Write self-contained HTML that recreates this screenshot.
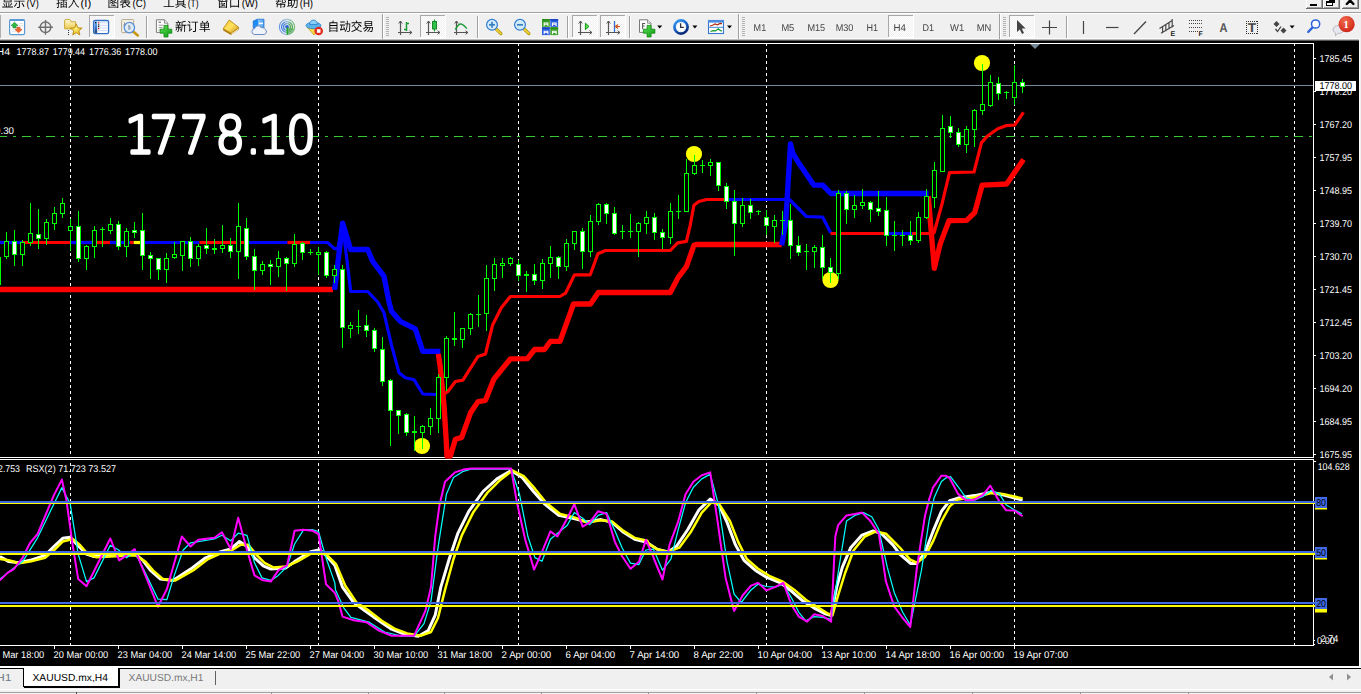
<!DOCTYPE html><html><head><meta charset="utf-8"><title>XAUUSD.mx,H4</title><style>html,body{margin:0;padding:0;background:#f0f0f0;overflow:hidden}body{width:1361px;height:694px;position:relative}</style></head><body><svg width="1361" height="694" viewBox="0 0 1361 694" font-family="Liberation Sans, Noto Sans CJK SC, sans-serif" style="position:absolute;left:0;top:0;text-rendering:geometricPrecision"><rect x="0" y="0" width="1361" height="694" fill="#f0f0f0" /><g shape-rendering="crispEdges"><rect x="0" y="41" width="1359" height="625" fill="#000" /><rect x="0" y="38" width="1361" height="1" fill="#fbfbfb" /><rect x="0" y="39" width="1361" height="1" fill="#bcbcbc" /><rect x="0" y="40" width="1361" height="1" fill="#585858" /><rect x="0" y="43" width="1314" height="1" fill="#fff" /><rect x="1313" y="43" width="1" height="414" fill="#fff" /><rect x="0" y="457" width="1314" height="1" fill="#fff" /><rect x="0" y="459" width="1314" height="1" fill="#fff" /><rect x="1313" y="459" width="1" height="187" fill="#fff" /><rect x="0" y="645" width="1314" height="1" fill="#fff" /></g><g shape-rendering="crispEdges" stroke="#fff" stroke-width="1" stroke-dasharray="3 3"><line x1="70.5" y1="43" x2="70.5" y2="457"/><line x1="70.5" y1="463" x2="70.5" y2="645"/><line x1="318.5" y1="43" x2="318.5" y2="457"/><line x1="318.5" y1="463" x2="318.5" y2="645"/><line x1="518.5" y1="43" x2="518.5" y2="457"/><line x1="518.5" y1="463" x2="518.5" y2="645"/><line x1="766.5" y1="43" x2="766.5" y2="457"/><line x1="766.5" y1="463" x2="766.5" y2="645"/><line x1="1014.5" y1="43" x2="1014.5" y2="457"/><line x1="1014.5" y1="463" x2="1014.5" y2="645"/><line x1="1294.5" y1="43" x2="1294.5" y2="457"/><line x1="1294.5" y1="463" x2="1294.5" y2="645"/></g><g shape-rendering="crispEdges"><rect x="0" y="85" width="1313" height="1" fill="#778899" /><line x1="-2" y1="136.5" x2="1313" y2="136.5" stroke="#32cd32" stroke-width="1" stroke-dasharray="9 6 3 6"/></g><g transform="scale(0.9,1)"><text x="138.9 166.2 199.7 239.4 273.3 287.4 318.2" y="152.7" font-family="DejaVu Sans, Liberation Sans, sans-serif" font-weight="200" font-size="51.5" fill="#fff" stroke="#fff" stroke-width="3.3" stroke-linejoin="round">1778.10</text></g><g stroke-linejoin="round" stroke-linecap="butt"><polyline points="-5.0,242.5 23.0,242.5" fill="none" stroke="#0000ff" stroke-width="3.2" /><polyline points="23.0,242.5 70.0,242.5" fill="none" stroke="#ff0000" stroke-width="3.2" /><polyline points="70.0,242.5 95.0,242.5" fill="none" stroke="#0000ff" stroke-width="3.2" /><polyline points="95.0,242.5 110.0,242.5" fill="none" stroke="#ff0000" stroke-width="3.2" /><polyline points="110.0,242.5 130.0,242.5" fill="none" stroke="#0000ff" stroke-width="3.2" /><polyline points="130.0,242.5 133.7,242.5" fill="none" stroke="#ff0000" stroke-width="3.2" /><polyline points="133.7,242.5 141.0,242.5" fill="none" stroke="#ffff00" stroke-width="3.2" /><polyline points="141.0,242.5 199.4,242.5" fill="none" stroke="#0000ff" stroke-width="3.2" /><polyline points="199.4,242.5 246.0,242.5" fill="none" stroke="#ff0000" stroke-width="3.2" /><polyline points="246.0,242.5 287.5,242.5" fill="none" stroke="#0000ff" stroke-width="3.2" /><polyline points="287.5,242.5 310.0,242.5" fill="none" stroke="#ff0000" stroke-width="3.2" /><polyline points="310.0,242.5 327.5,242.5 334.4,248.6 338.0,248.6 342.6,224.0 350.7,291.5 367.7,291.5 377.7,302.0 383.9,312.5 391.5,345.1 399.0,372.7 405.3,377.7 414.0,379.7 422.8,394.0 436.6,394.5" fill="none" stroke="#0000ff" stroke-width="3.2" /><polyline points="437.0,394.8 442.9,394.8 447.9,391.5 455.4,381.5 462.9,380.2 478.0,356.4 485.5,353.9 492.5,325.3 501.3,307.7 510.3,296.5 560.0,296.5 565.5,293.2 574.5,274.8 590.3,274.8 597.9,253.8 605.4,250.5 670.3,250.5 677.6,242.8 686.4,241.3 690.2,225.3 693.9,205.2 698.9,201.5 706.6,199.5 725.3,199.5" fill="none" stroke="#ff0000" stroke-width="3.2" /><polyline points="725.3,199.5 789.5,199.5 806.4,216.5 822.7,217.1 830.6,232.8" fill="none" stroke="#0000ff" stroke-width="3.2" /><polyline points="830.6,233.5 885.7,233.5" fill="none" stroke="#ff0000" stroke-width="3.2" /><polyline points="885.7,233.5 912.1,233.5" fill="none" stroke="#0000ff" stroke-width="3.2" /><polyline points="912.1,233.5 928.3,233.5 934.0,233.0 942.0,204.0 949.5,172.6 974.0,172.0 981.5,142.6 987.8,135.7 997.8,128.8 1006.6,125.6 1014.7,125.0 1023.5,112.3" fill="none" stroke="#ff0000" stroke-width="3.2" /><polyline points="-5.0,289.5 333.0,289.5" fill="none" stroke="#ff0000" stroke-width="5.3" /><polyline points="334.6,289.8 342.6,223.1 350.7,249.5 367.7,249.5 372.7,261.4 384.0,276.4 389.0,302.0 391.5,311.3 400.2,321.3 415.3,328.8 422.8,351.4 440.4,351.4" fill="none" stroke="#0000ff" stroke-width="5.3" /><polyline points="438.3,353.9 440.3,367.5 444.0,405.0 446.3,442.0 447.0,456.0 450.4,456.0 455.4,439.2 461.7,437.4 470.5,412.8 478.0,401.6 485.5,400.3 493.8,379.2 510.5,358.8 527.5,358.6 534.6,349.5 544.5,349.5 550.5,341.3 560.0,341.3 573.5,304.0 590.5,304.0 598.3,292.5 670.3,292.5 678.1,277.6 686.4,266.7 693.9,245.3 696.4,244.5 781.7,244.5" fill="none" stroke="#ff0000" stroke-width="5.3" /><polyline points="781.7,245.3 785.7,222.0 790.5,143.8 792.6,152.6 797.6,161.3 813.9,185.2 822.7,185.2 830.8,193.5 928.6,193.5" fill="none" stroke="#0000ff" stroke-width="5.3" /><polyline points="928.3,196.3 934.3,268.4 940.2,243.9 949.0,220.7 966.6,220.4 974.7,212.6 982.1,185.2 994.0,184.6 1006.6,184.0 1023.5,159.5" fill="none" stroke="#ff0000" stroke-width="5.3" /></g><circle cx="422" cy="446" r="8.1" fill="#ffff00"/><circle cx="694" cy="154" r="8.1" fill="#ffff00"/><circle cx="830.5" cy="280" r="8.1" fill="#ffff00"/><circle cx="982" cy="63" r="8.1" fill="#ffff00"/><g shape-rendering="crispEdges"><rect x="0" y="257" width="1" height="28" fill="#00ff00" /><rect x="6" y="232" width="1" height="27" fill="#00ff00" /><rect x="4" y="241" width="5" height="16" fill="#00ff00" /><rect x="5" y="242" width="3" height="14" fill="#000" /><rect x="14" y="230" width="1" height="36" fill="#00ff00" /><rect x="12" y="241" width="5" height="14" fill="#00ff00" /><rect x="13" y="242" width="3" height="12" fill="#fff" /><rect x="22" y="240" width="1" height="26" fill="#00ff00" /><rect x="20" y="242" width="5" height="13" fill="#00ff00" /><rect x="21" y="243" width="3" height="11" fill="#000" /><rect x="30" y="203" width="1" height="43" fill="#00ff00" /><rect x="28" y="233" width="5" height="10" fill="#00ff00" /><rect x="29" y="234" width="3" height="8" fill="#000" /><rect x="38" y="209" width="1" height="40" fill="#00ff00" /><rect x="36" y="234" width="5" height="5" fill="#00ff00" /><rect x="37" y="235" width="3" height="3" fill="#fff" /><rect x="46" y="219" width="1" height="26" fill="#00ff00" /><rect x="44" y="222" width="5" height="17" fill="#00ff00" /><rect x="45" y="223" width="3" height="15" fill="#000" /><rect x="54" y="207" width="1" height="23" fill="#00ff00" /><rect x="52" y="213" width="5" height="11" fill="#00ff00" /><rect x="53" y="214" width="3" height="9" fill="#000" /><rect x="62" y="198" width="1" height="20" fill="#00ff00" /><rect x="60" y="203" width="5" height="11" fill="#00ff00" /><rect x="61" y="204" width="3" height="9" fill="#000" /><rect x="70" y="219" width="1" height="32" fill="#00ff00" /><rect x="68" y="226" width="5" height="5" fill="#00ff00" /><rect x="69" y="227" width="3" height="3" fill="#000" /><rect x="78" y="211" width="1" height="51" fill="#00ff00" /><rect x="76" y="226" width="5" height="33" fill="#00ff00" /><rect x="77" y="227" width="3" height="31" fill="#fff" /><rect x="86" y="245" width="1" height="25" fill="#00ff00" /><rect x="84" y="246" width="5" height="13" fill="#00ff00" /><rect x="85" y="247" width="3" height="11" fill="#000" /><rect x="94" y="226" width="1" height="32" fill="#00ff00" /><rect x="92" y="230" width="5" height="17" fill="#00ff00" /><rect x="93" y="231" width="3" height="15" fill="#000" /><rect x="102" y="227" width="1" height="20" fill="#00ff00" /><rect x="100" y="229" width="5" height="1" fill="#00ff00" /><rect x="110" y="218" width="1" height="16" fill="#00ff00" /><rect x="108" y="224" width="5" height="7" fill="#00ff00" /><rect x="109" y="225" width="3" height="5" fill="#000" /><rect x="118" y="221" width="1" height="29" fill="#00ff00" /><rect x="116" y="224" width="5" height="23" fill="#00ff00" /><rect x="117" y="225" width="3" height="21" fill="#fff" /><rect x="126" y="228" width="1" height="29" fill="#00ff00" /><rect x="124" y="231" width="5" height="16" fill="#00ff00" /><rect x="125" y="232" width="3" height="14" fill="#000" /><rect x="134" y="222" width="1" height="16" fill="#00ff00" /><rect x="132" y="230" width="5" height="3" fill="#00ff00" /><rect x="133" y="231" width="3" height="1" fill="#fff" /><rect x="142" y="213" width="1" height="57" fill="#00ff00" /><rect x="140" y="230" width="5" height="26" fill="#00ff00" /><rect x="141" y="231" width="3" height="24" fill="#fff" /><rect x="150" y="252" width="1" height="27" fill="#00ff00" /><rect x="148" y="255" width="5" height="4" fill="#00ff00" /><rect x="149" y="256" width="3" height="2" fill="#fff" /><rect x="158" y="258" width="1" height="22" fill="#00ff00" /><rect x="156" y="258" width="5" height="12" fill="#00ff00" /><rect x="157" y="259" width="3" height="10" fill="#fff" /><rect x="166" y="253" width="1" height="30" fill="#00ff00" /><rect x="164" y="258" width="5" height="12" fill="#00ff00" /><rect x="165" y="259" width="3" height="10" fill="#000" /><rect x="174" y="242" width="1" height="17" fill="#00ff00" /><rect x="172" y="254" width="5" height="4" fill="#00ff00" /><rect x="173" y="255" width="3" height="2" fill="#000" /><rect x="182" y="241" width="1" height="30" fill="#00ff00" /><rect x="180" y="241" width="5" height="15" fill="#00ff00" /><rect x="181" y="242" width="3" height="13" fill="#000" /><rect x="190" y="237" width="1" height="30" fill="#00ff00" /><rect x="188" y="241" width="5" height="18" fill="#00ff00" /><rect x="189" y="242" width="3" height="16" fill="#fff" /><rect x="198" y="244" width="1" height="22" fill="#00ff00" /><rect x="196" y="246" width="5" height="13" fill="#00ff00" /><rect x="197" y="247" width="3" height="11" fill="#000" /><rect x="206" y="228" width="1" height="26" fill="#00ff00" /><rect x="204" y="245" width="5" height="4" fill="#00ff00" /><rect x="205" y="246" width="3" height="2" fill="#fff" /><rect x="214" y="239" width="1" height="15" fill="#00ff00" /><rect x="212" y="248" width="5" height="2" fill="#00ff00" /><rect x="222" y="225" width="1" height="28" fill="#00ff00" /><rect x="220" y="245" width="5" height="4" fill="#00ff00" /><rect x="221" y="246" width="3" height="2" fill="#000" /><rect x="230" y="238" width="1" height="20" fill="#00ff00" /><rect x="228" y="245" width="5" height="7" fill="#00ff00" /><rect x="229" y="246" width="3" height="5" fill="#fff" /><rect x="238" y="203" width="1" height="76" fill="#00ff00" /><rect x="236" y="226" width="5" height="26" fill="#00ff00" /><rect x="237" y="227" width="3" height="24" fill="#000" /><rect x="246" y="218" width="1" height="42" fill="#00ff00" /><rect x="244" y="228" width="5" height="29" fill="#00ff00" /><rect x="245" y="229" width="3" height="27" fill="#fff" /><rect x="254" y="249" width="1" height="41" fill="#00ff00" /><rect x="252" y="256" width="5" height="15" fill="#00ff00" /><rect x="253" y="257" width="3" height="13" fill="#fff" /><rect x="262" y="261" width="1" height="14" fill="#00ff00" /><rect x="260" y="264" width="5" height="7" fill="#00ff00" /><rect x="261" y="265" width="3" height="5" fill="#000" /><rect x="270" y="260" width="1" height="25" fill="#00ff00" /><rect x="268" y="264" width="5" height="3" fill="#00ff00" /><rect x="269" y="265" width="3" height="1" fill="#fff" /><rect x="278" y="251" width="1" height="26" fill="#00ff00" /><rect x="276" y="258" width="5" height="9" fill="#00ff00" /><rect x="277" y="259" width="3" height="7" fill="#000" /><rect x="286" y="257" width="1" height="34" fill="#00ff00" /><rect x="284" y="258" width="5" height="6" fill="#00ff00" /><rect x="285" y="259" width="3" height="4" fill="#fff" /><rect x="294" y="234" width="1" height="33" fill="#00ff00" /><rect x="292" y="244" width="5" height="20" fill="#00ff00" /><rect x="293" y="245" width="3" height="18" fill="#000" /><rect x="302" y="242" width="1" height="18" fill="#00ff00" /><rect x="300" y="243" width="5" height="10" fill="#00ff00" /><rect x="301" y="244" width="3" height="8" fill="#fff" /><rect x="310" y="249" width="1" height="6" fill="#00ff00" /><rect x="308" y="252" width="5" height="1" fill="#00ff00" /><rect x="318" y="247" width="1" height="28" fill="#00ff00" /><rect x="316" y="252" width="5" height="3" fill="#00ff00" /><rect x="317" y="253" width="3" height="1" fill="#000" /><rect x="326" y="251" width="1" height="27" fill="#00ff00" /><rect x="324" y="252" width="5" height="24" fill="#00ff00" /><rect x="325" y="253" width="3" height="22" fill="#fff" /><rect x="334" y="265" width="1" height="18" fill="#00ff00" /><rect x="332" y="269" width="5" height="7" fill="#00ff00" /><rect x="333" y="270" width="3" height="5" fill="#000" /><rect x="342" y="265" width="1" height="83" fill="#00ff00" /><rect x="340" y="269" width="5" height="59" fill="#00ff00" /><rect x="341" y="270" width="3" height="57" fill="#fff" /><rect x="350" y="322" width="1" height="16" fill="#00ff00" /><rect x="348" y="325" width="5" height="4" fill="#00ff00" /><rect x="349" y="326" width="3" height="2" fill="#000" /><rect x="358" y="310" width="1" height="24" fill="#00ff00" /><rect x="356" y="326" width="5" height="1" fill="#00ff00" /><rect x="366" y="315" width="1" height="22" fill="#00ff00" /><rect x="364" y="325" width="5" height="6" fill="#00ff00" /><rect x="365" y="326" width="3" height="4" fill="#fff" /><rect x="374" y="328" width="1" height="24" fill="#00ff00" /><rect x="372" y="330" width="5" height="19" fill="#00ff00" /><rect x="373" y="331" width="3" height="17" fill="#fff" /><rect x="382" y="337" width="1" height="49" fill="#00ff00" /><rect x="380" y="349" width="5" height="33" fill="#00ff00" /><rect x="381" y="350" width="3" height="31" fill="#fff" /><rect x="390" y="379" width="1" height="67" fill="#00ff00" /><rect x="388" y="380" width="5" height="31" fill="#00ff00" /><rect x="389" y="381" width="3" height="29" fill="#fff" /><rect x="398" y="410" width="1" height="24" fill="#00ff00" /><rect x="396" y="410" width="5" height="6" fill="#00ff00" /><rect x="397" y="411" width="3" height="4" fill="#fff" /><rect x="406" y="413" width="1" height="23" fill="#00ff00" /><rect x="404" y="414" width="5" height="19" fill="#00ff00" /><rect x="405" y="415" width="3" height="17" fill="#fff" /><rect x="414" y="416" width="1" height="35" fill="#00ff00" /><rect x="412" y="431" width="5" height="2" fill="#00ff00" /><rect x="422" y="425" width="1" height="24" fill="#00ff00" /><rect x="420" y="426" width="5" height="7" fill="#00ff00" /><rect x="421" y="427" width="3" height="5" fill="#000" /><rect x="430" y="408" width="1" height="27" fill="#00ff00" /><rect x="428" y="418" width="5" height="9" fill="#00ff00" /><rect x="429" y="419" width="3" height="7" fill="#000" /><rect x="438" y="374" width="1" height="59" fill="#00ff00" /><rect x="436" y="377" width="5" height="42" fill="#00ff00" /><rect x="437" y="378" width="3" height="40" fill="#000" /><rect x="446" y="336" width="1" height="55" fill="#00ff00" /><rect x="444" y="338" width="5" height="40" fill="#00ff00" /><rect x="445" y="339" width="3" height="38" fill="#000" /><rect x="454" y="312" width="1" height="34" fill="#00ff00" /><rect x="452" y="338" width="5" height="2" fill="#00ff00" /><rect x="462" y="328" width="1" height="20" fill="#00ff00" /><rect x="460" y="328" width="5" height="12" fill="#00ff00" /><rect x="461" y="329" width="3" height="10" fill="#000" /><rect x="470" y="313" width="1" height="22" fill="#00ff00" /><rect x="468" y="314" width="5" height="15" fill="#00ff00" /><rect x="469" y="315" width="3" height="13" fill="#000" /><rect x="478" y="295" width="1" height="32" fill="#00ff00" /><rect x="476" y="314" width="5" height="1" fill="#00ff00" /><rect x="486" y="265" width="1" height="66" fill="#00ff00" /><rect x="484" y="278" width="5" height="36" fill="#00ff00" /><rect x="485" y="279" width="3" height="34" fill="#000" /><rect x="494" y="258" width="1" height="33" fill="#00ff00" /><rect x="492" y="264" width="5" height="15" fill="#00ff00" /><rect x="493" y="265" width="3" height="13" fill="#000" /><rect x="502" y="258" width="1" height="20" fill="#00ff00" /><rect x="500" y="263" width="5" height="3" fill="#00ff00" /><rect x="501" y="264" width="3" height="1" fill="#000" /><rect x="510" y="257" width="1" height="9" fill="#00ff00" /><rect x="508" y="258" width="5" height="6" fill="#00ff00" /><rect x="509" y="259" width="3" height="4" fill="#000" /><rect x="518" y="260" width="1" height="21" fill="#00ff00" /><rect x="516" y="264" width="5" height="12" fill="#00ff00" /><rect x="517" y="265" width="3" height="10" fill="#fff" /><rect x="526" y="271" width="1" height="21" fill="#00ff00" /><rect x="524" y="274" width="5" height="2" fill="#00ff00" /><rect x="534" y="264" width="1" height="21" fill="#00ff00" /><rect x="532" y="274" width="5" height="7" fill="#00ff00" /><rect x="533" y="275" width="3" height="5" fill="#fff" /><rect x="542" y="259" width="1" height="30" fill="#00ff00" /><rect x="540" y="263" width="5" height="18" fill="#00ff00" /><rect x="541" y="264" width="3" height="16" fill="#000" /><rect x="550" y="246" width="1" height="32" fill="#00ff00" /><rect x="548" y="257" width="5" height="7" fill="#00ff00" /><rect x="549" y="258" width="3" height="5" fill="#000" /><rect x="558" y="256" width="1" height="23" fill="#00ff00" /><rect x="556" y="257" width="5" height="10" fill="#00ff00" /><rect x="557" y="258" width="3" height="8" fill="#fff" /><rect x="566" y="239" width="1" height="32" fill="#00ff00" /><rect x="564" y="243" width="5" height="24" fill="#00ff00" /><rect x="565" y="244" width="3" height="22" fill="#000" /><rect x="574" y="231" width="1" height="19" fill="#00ff00" /><rect x="572" y="231" width="5" height="13" fill="#00ff00" /><rect x="573" y="232" width="3" height="11" fill="#000" /><rect x="582" y="228" width="1" height="41" fill="#00ff00" /><rect x="580" y="231" width="5" height="21" fill="#00ff00" /><rect x="581" y="232" width="3" height="19" fill="#fff" /><rect x="590" y="215" width="1" height="42" fill="#00ff00" /><rect x="588" y="221" width="5" height="31" fill="#00ff00" /><rect x="589" y="222" width="3" height="29" fill="#000" /><rect x="598" y="203" width="1" height="22" fill="#00ff00" /><rect x="596" y="204" width="5" height="18" fill="#00ff00" /><rect x="597" y="205" width="3" height="16" fill="#000" /><rect x="606" y="203" width="1" height="21" fill="#00ff00" /><rect x="604" y="204" width="5" height="10" fill="#00ff00" /><rect x="605" y="205" width="3" height="8" fill="#fff" /><rect x="614" y="207" width="1" height="28" fill="#00ff00" /><rect x="612" y="213" width="5" height="21" fill="#00ff00" /><rect x="613" y="214" width="3" height="19" fill="#fff" /><rect x="622" y="225" width="1" height="14" fill="#00ff00" /><rect x="620" y="231" width="5" height="1" fill="#00ff00" /><rect x="630" y="214" width="1" height="24" fill="#00ff00" /><rect x="628" y="231" width="5" height="1" fill="#00ff00" /><rect x="638" y="222" width="1" height="35" fill="#00ff00" /><rect x="636" y="223" width="5" height="9" fill="#00ff00" /><rect x="637" y="224" width="3" height="7" fill="#000" /><rect x="646" y="211" width="1" height="23" fill="#00ff00" /><rect x="644" y="217" width="5" height="7" fill="#00ff00" /><rect x="645" y="218" width="3" height="5" fill="#000" /><rect x="654" y="213" width="1" height="27" fill="#00ff00" /><rect x="652" y="217" width="5" height="16" fill="#00ff00" /><rect x="653" y="218" width="3" height="14" fill="#fff" /><rect x="662" y="229" width="1" height="20" fill="#00ff00" /><rect x="660" y="232" width="5" height="6" fill="#00ff00" /><rect x="661" y="233" width="3" height="4" fill="#fff" /><rect x="670" y="203" width="1" height="41" fill="#00ff00" /><rect x="668" y="211" width="5" height="27" fill="#00ff00" /><rect x="669" y="212" width="3" height="25" fill="#000" /><rect x="678" y="195" width="1" height="24" fill="#00ff00" /><rect x="676" y="211" width="5" height="1" fill="#00ff00" /><rect x="686" y="159" width="1" height="53" fill="#00ff00" /><rect x="684" y="173" width="5" height="39" fill="#00ff00" /><rect x="685" y="174" width="3" height="37" fill="#000" /><rect x="694" y="155" width="1" height="20" fill="#00ff00" /><rect x="692" y="165" width="5" height="9" fill="#00ff00" /><rect x="693" y="166" width="3" height="7" fill="#000" /><rect x="702" y="160" width="1" height="13" fill="#00ff00" /><rect x="700" y="165" width="5" height="1" fill="#00ff00" /><rect x="710" y="159" width="1" height="17" fill="#00ff00" /><rect x="708" y="162" width="5" height="4" fill="#00ff00" /><rect x="709" y="163" width="3" height="2" fill="#000" /><rect x="718" y="162" width="1" height="29" fill="#00ff00" /><rect x="716" y="162" width="5" height="24" fill="#00ff00" /><rect x="717" y="163" width="3" height="22" fill="#fff" /><rect x="726" y="183" width="1" height="26" fill="#00ff00" /><rect x="724" y="186" width="5" height="16" fill="#00ff00" /><rect x="725" y="187" width="3" height="14" fill="#fff" /><rect x="734" y="190" width="1" height="66" fill="#00ff00" /><rect x="732" y="201" width="5" height="23" fill="#00ff00" /><rect x="733" y="202" width="3" height="21" fill="#fff" /><rect x="742" y="198" width="1" height="29" fill="#00ff00" /><rect x="740" y="205" width="5" height="19" fill="#00ff00" /><rect x="741" y="206" width="3" height="17" fill="#000" /><rect x="750" y="199" width="1" height="20" fill="#00ff00" /><rect x="748" y="205" width="5" height="8" fill="#00ff00" /><rect x="749" y="206" width="3" height="6" fill="#fff" /><rect x="758" y="210" width="1" height="5" fill="#00ff00" /><rect x="756" y="211" width="5" height="1" fill="#00ff00" /><rect x="766" y="210" width="1" height="25" fill="#00ff00" /><rect x="764" y="217" width="5" height="9" fill="#00ff00" /><rect x="765" y="218" width="3" height="7" fill="#fff" /><rect x="774" y="215" width="1" height="28" fill="#00ff00" /><rect x="772" y="220" width="5" height="7" fill="#00ff00" /><rect x="773" y="221" width="3" height="5" fill="#000" /><rect x="782" y="211" width="1" height="24" fill="#00ff00" /><rect x="780" y="220" width="5" height="1" fill="#00ff00" /><rect x="790" y="204" width="1" height="55" fill="#00ff00" /><rect x="788" y="220" width="5" height="26" fill="#00ff00" /><rect x="789" y="221" width="3" height="24" fill="#fff" /><rect x="798" y="236" width="1" height="20" fill="#00ff00" /><rect x="796" y="245" width="5" height="8" fill="#00ff00" /><rect x="797" y="246" width="3" height="6" fill="#fff" /><rect x="806" y="244" width="1" height="26" fill="#00ff00" /><rect x="804" y="251" width="5" height="1" fill="#00ff00" /><rect x="814" y="245" width="1" height="23" fill="#00ff00" /><rect x="812" y="247" width="5" height="5" fill="#00ff00" /><rect x="813" y="248" width="3" height="3" fill="#000" /><rect x="822" y="235" width="1" height="44" fill="#00ff00" /><rect x="820" y="247" width="5" height="21" fill="#00ff00" /><rect x="821" y="248" width="3" height="19" fill="#fff" /><rect x="830" y="258" width="1" height="25" fill="#00ff00" /><rect x="828" y="267" width="5" height="6" fill="#00ff00" /><rect x="829" y="268" width="3" height="4" fill="#fff" /><rect x="838" y="190" width="1" height="89" fill="#00ff00" /><rect x="836" y="193" width="5" height="81" fill="#00ff00" /><rect x="837" y="194" width="3" height="79" fill="#000" /><rect x="846" y="191" width="1" height="33" fill="#00ff00" /><rect x="844" y="193" width="5" height="17" fill="#00ff00" /><rect x="845" y="194" width="3" height="15" fill="#fff" /><rect x="854" y="195" width="1" height="23" fill="#00ff00" /><rect x="852" y="205" width="5" height="5" fill="#00ff00" /><rect x="853" y="206" width="3" height="3" fill="#000" /><rect x="862" y="189" width="1" height="20" fill="#00ff00" /><rect x="860" y="202" width="5" height="4" fill="#00ff00" /><rect x="861" y="203" width="3" height="2" fill="#000" /><rect x="870" y="201" width="1" height="21" fill="#00ff00" /><rect x="868" y="202" width="5" height="8" fill="#00ff00" /><rect x="869" y="203" width="3" height="6" fill="#fff" /><rect x="878" y="191" width="1" height="25" fill="#00ff00" /><rect x="876" y="208" width="5" height="4" fill="#00ff00" /><rect x="877" y="209" width="3" height="2" fill="#fff" /><rect x="886" y="197" width="1" height="49" fill="#00ff00" /><rect x="884" y="210" width="5" height="26" fill="#00ff00" /><rect x="885" y="211" width="3" height="24" fill="#fff" /><rect x="894" y="221" width="1" height="30" fill="#00ff00" /><rect x="892" y="235" width="5" height="1" fill="#00ff00" /><rect x="902" y="230" width="1" height="16" fill="#00ff00" /><rect x="900" y="235" width="5" height="1" fill="#00ff00" /><rect x="910" y="221" width="1" height="24" fill="#00ff00" /><rect x="908" y="235" width="5" height="6" fill="#00ff00" /><rect x="909" y="236" width="3" height="4" fill="#fff" /><rect x="918" y="212" width="1" height="31" fill="#00ff00" /><rect x="916" y="217" width="5" height="24" fill="#00ff00" /><rect x="917" y="218" width="3" height="22" fill="#000" /><rect x="926" y="189" width="1" height="30" fill="#00ff00" /><rect x="924" y="196" width="5" height="22" fill="#00ff00" /><rect x="925" y="197" width="3" height="20" fill="#000" /><rect x="934" y="162" width="1" height="46" fill="#00ff00" /><rect x="932" y="170" width="5" height="28" fill="#00ff00" /><rect x="933" y="171" width="3" height="26" fill="#000" /><rect x="942" y="115" width="1" height="57" fill="#00ff00" /><rect x="940" y="128" width="5" height="44" fill="#00ff00" /><rect x="941" y="129" width="3" height="42" fill="#000" /><rect x="950" y="116" width="1" height="22" fill="#00ff00" /><rect x="948" y="126" width="5" height="7" fill="#00ff00" /><rect x="949" y="127" width="3" height="5" fill="#fff" /><rect x="958" y="128" width="1" height="19" fill="#00ff00" /><rect x="956" y="132" width="5" height="13" fill="#00ff00" /><rect x="957" y="133" width="3" height="11" fill="#fff" /><rect x="966" y="126" width="1" height="27" fill="#00ff00" /><rect x="964" y="129" width="5" height="16" fill="#00ff00" /><rect x="965" y="130" width="3" height="14" fill="#000" /><rect x="974" y="109" width="1" height="38" fill="#00ff00" /><rect x="972" y="110" width="5" height="20" fill="#00ff00" /><rect x="973" y="111" width="3" height="18" fill="#000" /><rect x="982" y="64" width="1" height="51" fill="#00ff00" /><rect x="980" y="104" width="5" height="7" fill="#00ff00" /><rect x="981" y="105" width="3" height="5" fill="#000" /><rect x="990" y="75" width="1" height="32" fill="#00ff00" /><rect x="988" y="82" width="5" height="24" fill="#00ff00" /><rect x="989" y="83" width="3" height="22" fill="#000" /><rect x="998" y="77" width="1" height="23" fill="#00ff00" /><rect x="996" y="83" width="5" height="11" fill="#00ff00" /><rect x="997" y="84" width="3" height="9" fill="#fff" /><rect x="1006" y="91" width="1" height="8" fill="#00ff00" /><rect x="1004" y="92" width="5" height="1" fill="#00ff00" /><rect x="1014" y="65" width="1" height="40" fill="#00ff00" /><rect x="1012" y="82" width="5" height="16" fill="#00ff00" /><rect x="1013" y="83" width="3" height="14" fill="#000" /><rect x="1022" y="79" width="1" height="14" fill="#00ff00" /><rect x="1020" y="82" width="5" height="5" fill="#00ff00" /><rect x="1021" y="83" width="3" height="3" fill="#fff" /></g><polygon points="1030,44 1040,44 1035,49" fill="#778899"/><g stroke-linejoin="round"><polyline points="0.0,556.6 8.8,561.6 18.8,562.8 30.1,560.3 45.1,555.3 53.9,546.5 62.7,538.3 70.2,537.3 77.7,545.3 86.5,554.1 94.0,556.6 110.3,555.3 135.4,554.1 142.9,560.3 150.5,570.4 160.5,579.1 173.0,580.4 190.6,569.1 205.6,557.8 220.7,551.6 230.7,549.0 239.5,541.5 247.0,546.5 254.5,557.8 263.3,565.8 270.8,569.1 285.9,567.9 294.6,561.6 310.9,551.6 319.7,549.8 326.0,555.3 334.8,565.3 342.5,587.1 353.7,602.5 365.0,610.9 379.0,620.8 391.6,629.2 404.3,634.0 418.3,636.2 428.2,630.6 435.2,615.2 440.8,587.1 449.2,559.0 457.7,533.7 468.9,511.2 483.0,491.5 497.0,478.9 511.1,470.5 522.3,477.5 533.5,491.5 544.8,504.2 558.8,515.4 572.9,518.2 586.9,521.9 601.0,519.6 612.2,522.4 623.5,532.3 634.7,539.3 645.9,542.1 648.4,543.5 656.9,549.1 668.1,551.9 676.5,546.3 687.8,529.5 699.0,509.8 710.2,499.1 718.7,504.2 727.1,522.4 735.5,544.9 744.0,560.4 755.2,570.2 766.4,577.2 780.5,582.8 791.7,591.3 803.0,601.1 814.2,608.1 825.4,613.8 831.1,615.7 836.7,587.1 842.3,567.4 850.7,547.7 862.0,535.1 873.2,530.9 881.6,533.7 892.9,544.9 900.0,554.4 910.8,563.5 916.6,563.5 924.9,552.8 933.1,531.2 941.4,511.3 949.7,500.6 958.0,498.1 974.6,495.6 991.1,492.3 1002.7,494.8 1022.6,500.1" fill="none" stroke="#fff" stroke-width="3" /><polyline points="0.0,559.1 8.8,560.3 18.8,563.3 30.1,561.6 45.1,557.8 53.9,550.3 62.7,541.5 72.7,539.0 80.2,545.3 87.8,554.1 96.5,557.3 110.3,556.6 135.4,555.3 145.4,561.6 153.0,570.4 163.0,579.1 175.5,580.4 193.1,570.4 208.1,559.1 221.9,552.8 231.9,550.3 240.7,544.8 248.2,544.8 255.8,554.1 264.5,562.8 273.3,567.4 285.9,566.6 297.1,561.6 312.2,552.8 321.0,551.6 328.5,556.6 336.0,564.1 345.3,585.7 356.5,602.5 369.2,610.9 381.8,620.8 394.5,628.6 407.1,633.4 421.2,635.7 431.0,632.0 438.0,618.0 445.0,589.9 453.5,559.0 461.9,535.1 473.1,512.6 487.2,492.9 499.8,480.3 512.5,470.5 523.7,476.1 534.9,488.7 546.2,502.8 560.2,514.0 574.3,517.4 586.9,522.4 601.0,520.2 612.2,521.6 623.5,530.9 634.7,537.9 647.3,540.7 648.4,543.5 656.9,549.1 668.1,551.9 679.3,547.7 690.6,532.3 701.8,512.6 711.6,502.2 720.1,505.6 729.9,521.0 738.3,542.1 746.8,559.0 758.0,568.8 769.2,575.8 783.3,582.0 794.5,589.9 805.8,599.7 817.0,606.7 828.3,613.8 832.5,615.2 838.1,595.5 845.1,573.0 853.5,550.5 864.8,536.5 876.0,531.4 885.9,533.7 895.7,543.5 900.0,547.8 909.9,559.4 916.6,562.7 924.9,556.9 933.1,541.2 941.4,521.3 949.7,506.4 958.0,499.4 974.6,497.3 991.1,493.1 1002.7,493.9 1022.6,498.4" fill="none" stroke="#ffff00" stroke-width="2.5" /><polyline points="0.0,579.1 13.8,567.9 22.6,561.6 37.6,537.8 53.9,503.9 61.9,487.6 70.2,503.9 78.2,554.1 86.5,581.6 94.0,577.9 110.3,545.3 119.1,550.3 126.6,557.8 134.7,551.6 142.9,567.9 158.0,599.2 166.8,599.7 174.3,575.4 183.0,550.3 190.6,542.8 214.4,539.0 221.9,535.3 230.7,540.8 238.2,533.2 247.0,535.3 254.5,562.8 262.0,577.9 270.8,580.4 278.3,575.4 287.1,566.6 294.6,544.0 303.4,530.2 312.2,529.7 318.5,531.5 326.0,557.8 334.8,582.9 335.5,589.9 343.9,608.1 350.9,617.4 369.2,622.2 384.6,632.0 401.5,636.2 414.1,636.2 424.0,623.6 431.0,601.1 438.0,547.7 446.4,494.3 453.5,477.5 463.3,471.3 471.7,469.0 511.1,469.0 519.5,494.3 527.9,536.5 534.9,557.6 542.0,561.2 550.4,539.3 558.8,532.3 567.3,525.2 574.3,512.6 582.7,518.2 589.7,524.7 598.2,515.4 606.6,512.6 615.0,530.9 622.1,547.7 630.5,563.2 638.9,564.6 645.9,550.0 653.0,549.1 654.0,550.5 662.5,570.2 670.9,559.0 677.9,530.9 685.5,502.8 693.4,487.3 701.8,478.9 710.2,474.1 718.7,505.6 727.1,561.8 734.1,594.1 741.2,602.5 751.0,589.9 758.0,584.2 766.4,586.5 774.9,587.1 783.3,584.2 791.7,598.3 798.8,612.3 805.8,620.8 814.2,616.6 822.6,617.4 831.1,619.4 838.1,573.0 846.5,521.0 854.9,515.4 863.4,512.6 871.8,516.8 878.8,529.5 887.3,567.4 894.3,592.7 902.7,612.3 910.3,625.0 921.5,570.0 924.9,547.8 929.0,521.3 934.0,498.1 941.4,481.5 945.6,478.2 950.5,476.5 958.0,486.5 966.3,498.1 974.6,500.1 982.9,496.4 991.1,490.6 999.4,493.9 1006.0,504.7 1014.3,509.7 1021.8,513.8" fill="none" stroke="#00ffff" stroke-width="1.25" /><polyline points="0.0,580.4 7.5,572.9 13.8,569.1 22.6,557.8 30.1,542.8 37.6,534.0 53.9,495.1 61.9,479.6 66.4,500.2 72.7,545.3 78.2,579.1 86.5,586.2 110.3,538.5 119.1,560.3 126.6,555.3 134.7,549.0 158.0,606.7 166.8,589.2 181.8,536.5 190.6,546.5 198.1,539.8 214.4,537.8 221.9,532.2 230.7,549.0 238.2,517.7 247.0,550.3 254.5,575.4 262.0,579.9 270.8,581.6 278.3,570.4 287.1,565.3 294.6,530.7 303.4,529.7 312.2,530.7 318.5,534.0 326.0,584.2 334.8,592.9 338.3,601.1 342.5,616.6 353.7,620.2 366.4,622.2 379.0,630.6 391.6,635.7 414.1,635.7 425.4,610.9 431.0,587.1 435.2,536.5 439.4,505.6 445.0,481.7 454.9,472.4 463.3,469.6 471.7,468.5 511.1,468.5 516.7,501.4 525.1,539.3 534.1,569.6 542.0,551.9 550.4,531.4 557.4,536.5 567.3,518.2 574.3,504.2 582.7,526.6 589.7,522.4 598.2,511.2 606.6,514.0 615.0,542.1 622.1,556.2 630.5,568.8 638.9,561.8 645.9,539.9 653.0,556.2 654.0,559.0 662.5,579.5 669.5,544.9 677.9,522.4 685.5,494.3 693.4,481.7 701.8,475.2 710.2,472.4 717.3,519.6 725.7,578.6 734.1,610.9 742.6,595.5 751.0,585.7 758.0,582.8 766.4,590.4 774.9,587.1 783.3,582.8 791.7,605.3 798.8,616.6 807.2,621.6 814.2,614.3 822.6,616.0 831.1,621.6 835.3,536.5 838.1,525.2 846.5,515.4 854.9,514.0 862.0,512.6 870.4,521.0 878.8,533.7 885.9,581.4 894.3,606.7 902.7,618.0 910.3,627.0 916.6,570.0 920.7,542.8 924.9,516.3 929.0,499.7 933.1,487.3 941.4,475.7 945.6,475.7 949.7,478.2 958.0,493.9 966.3,500.6 974.6,499.7 982.9,494.8 990.3,485.7 999.4,501.4 1006.0,510.2 1014.3,510.5 1022.6,516.3" fill="none" stroke="#ff00ff" stroke-width="2" /></g><g shape-rendering="crispEdges"><rect x="0" y="501" width="1315" height="2" fill="#4169e1" /><rect x="0" y="503" width="1315" height="1" fill="#ffff00" /><rect x="0" y="551" width="1315" height="2" fill="#4169e1" /><rect x="0" y="553" width="1315" height="2" fill="#ffff00" /><rect x="0" y="602" width="1315" height="2" fill="#4169e1" /><rect x="0" y="605" width="1315" height="2" fill="#ffff00" /></g><text x="-3.5" y="55" font-size="9.8" fill="#fff" textLength="13.6" lengthAdjust="spacingAndGlyphs" >H4</text><text x="16.5" y="55" font-size="9.8" fill="#fff" textLength="32.4" lengthAdjust="spacingAndGlyphs" >1778.87</text><text x="52.7" y="55" font-size="9.8" fill="#fff" textLength="32.4" lengthAdjust="spacingAndGlyphs" >1779.44</text><text x="88.9" y="55" font-size="9.8" fill="#fff" textLength="32.4" lengthAdjust="spacingAndGlyphs" >1776.36</text><text x="125.1" y="55" font-size="9.8" fill="#fff" textLength="32.4" lengthAdjust="spacingAndGlyphs" >1778.00</text><text x="14" y="134" font-size="9.8" fill="#fff" textLength="19" lengthAdjust="spacingAndGlyphs" text-anchor="end" >0.30</text><text x="-2" y="471.6" font-size="9.8" fill="#fff" textLength="22" lengthAdjust="spacingAndGlyphs" >2.753</text><text x="26" y="471.6" font-size="9.8" fill="#fff" textLength="90" lengthAdjust="spacingAndGlyphs" >RSX(2) 71.723 73.527</text><g shape-rendering="crispEdges"><rect x="1314" y="58" width="2" height="1" fill="#fff" /><rect x="1314" y="91" width="2" height="1" fill="#fff" /><rect x="1314" y="124" width="2" height="1" fill="#fff" /><rect x="1314" y="157" width="2" height="1" fill="#fff" /><rect x="1314" y="190" width="2" height="1" fill="#fff" /><rect x="1314" y="223" width="2" height="1" fill="#fff" /><rect x="1314" y="256" width="2" height="1" fill="#fff" /><rect x="1314" y="289" width="2" height="1" fill="#fff" /><rect x="1314" y="322" width="2" height="1" fill="#fff" /><rect x="1314" y="355" width="2" height="1" fill="#fff" /><rect x="1314" y="388" width="2" height="1" fill="#fff" /><rect x="1314" y="421" width="2" height="1" fill="#fff" /><rect x="1314" y="454" width="2" height="1" fill="#fff" /></g><text x="1319.6" y="61.8" font-size="9.8" fill="#fff" textLength="32.5" lengthAdjust="spacingAndGlyphs" >1785.45</text><text x="1319.6" y="94.8" font-size="9.8" fill="#fff" textLength="32.5" lengthAdjust="spacingAndGlyphs" >1776.20</text><text x="1319.6" y="127.8" font-size="9.8" fill="#fff" textLength="32.5" lengthAdjust="spacingAndGlyphs" >1767.20</text><text x="1319.6" y="160.8" font-size="9.8" fill="#fff" textLength="32.5" lengthAdjust="spacingAndGlyphs" >1757.95</text><text x="1319.6" y="193.8" font-size="9.8" fill="#fff" textLength="32.5" lengthAdjust="spacingAndGlyphs" >1748.95</text><text x="1319.6" y="226.8" font-size="9.8" fill="#fff" textLength="32.5" lengthAdjust="spacingAndGlyphs" >1739.70</text><text x="1319.6" y="259.8" font-size="9.8" fill="#fff" textLength="32.5" lengthAdjust="spacingAndGlyphs" >1730.70</text><text x="1319.6" y="292.8" font-size="9.8" fill="#fff" textLength="32.5" lengthAdjust="spacingAndGlyphs" >1721.45</text><text x="1319.6" y="325.8" font-size="9.8" fill="#fff" textLength="32.5" lengthAdjust="spacingAndGlyphs" >1712.45</text><text x="1319.6" y="358.8" font-size="9.8" fill="#fff" textLength="32.5" lengthAdjust="spacingAndGlyphs" >1703.20</text><text x="1319.6" y="391.8" font-size="9.8" fill="#fff" textLength="32.5" lengthAdjust="spacingAndGlyphs" >1694.20</text><text x="1319.6" y="424.8" font-size="9.8" fill="#fff" textLength="32.5" lengthAdjust="spacingAndGlyphs" >1684.95</text><text x="1319.6" y="457.8" font-size="9.8" fill="#fff" textLength="32.5" lengthAdjust="spacingAndGlyphs" >1675.95</text><rect x="1315" y="81" width="41" height="10" fill="#fff" /><text x="1319.6" y="88.8" font-size="9.8" fill="#000" textLength="32.5" lengthAdjust="spacingAndGlyphs" >1778.00</text><text x="1317.7" y="470.2" font-size="9.8" fill="#fff" textLength="32" lengthAdjust="spacingAndGlyphs" >104.628</text><text x="1317.1" y="644.2" font-size="9.8" fill="#fff" textLength="17.7" lengthAdjust="spacingAndGlyphs" >0.00</text><text x="1320.7" y="641.9" font-size="9.8" fill="#fff" textLength="17.6" lengthAdjust="spacingAndGlyphs" >2.74</text><rect x="1315" y="497" width="12" height="11" fill="#4169e1" /><rect x="1315" y="508" width="12" height="1.5" fill="#ffff00" /><text x="1316.2" y="506.2" font-size="10" fill="#000" textLength="9.8" lengthAdjust="spacingAndGlyphs" >80</text><rect x="1315" y="547" width="12" height="11" fill="#4169e1" /><rect x="1315" y="558" width="12" height="1.5" fill="#ffff00" /><text x="1316.2" y="556.2" font-size="10" fill="#000" textLength="9.8" lengthAdjust="spacingAndGlyphs" >50</text><rect x="1315" y="598" width="12" height="11" fill="#4169e1" /><rect x="1315" y="609" width="12" height="3.5" fill="#ffff00" /><text x="1316.2" y="607.2" font-size="10" fill="#000" textLength="9.8" lengthAdjust="spacingAndGlyphs" >20</text><g shape-rendering="crispEdges"><rect x="1314" y="461" width="2" height="1" fill="#fff" /><rect x="1314" y="640" width="1" height="1" fill="#fff" /><rect x="1314" y="644" width="1" height="1" fill="#fff" /></g><g shape-rendering="crispEdges"><rect x="-10" y="646" width="1" height="3" fill="#fff" /><rect x="54" y="646" width="1" height="3" fill="#fff" /><rect x="118" y="646" width="1" height="3" fill="#fff" /><rect x="182" y="646" width="1" height="3" fill="#fff" /><rect x="246" y="646" width="1" height="3" fill="#fff" /><rect x="310" y="646" width="1" height="3" fill="#fff" /><rect x="374" y="646" width="1" height="3" fill="#fff" /><rect x="438" y="646" width="1" height="3" fill="#fff" /><rect x="502" y="646" width="1" height="3" fill="#fff" /><rect x="566" y="646" width="1" height="3" fill="#fff" /><rect x="630" y="646" width="1" height="3" fill="#fff" /><rect x="694" y="646" width="1" height="3" fill="#fff" /><rect x="758" y="646" width="1" height="3" fill="#fff" /><rect x="822" y="646" width="1" height="3" fill="#fff" /><rect x="886" y="646" width="1" height="3" fill="#fff" /><rect x="950" y="646" width="1" height="3" fill="#fff" /><rect x="1014" y="646" width="1" height="3" fill="#fff" /></g><text x="-10.4" y="658.2" font-size="9.8" fill="#fff" textLength="54.6" lengthAdjust="spacingAndGlyphs" >18 Mar 18:00</text><text x="53.6" y="658.2" font-size="9.8" fill="#fff" textLength="54.6" lengthAdjust="spacingAndGlyphs" >20 Mar 00:00</text><text x="117.6" y="658.2" font-size="9.8" fill="#fff" textLength="54.6" lengthAdjust="spacingAndGlyphs" >23 Mar 04:00</text><text x="181.6" y="658.2" font-size="9.8" fill="#fff" textLength="54.6" lengthAdjust="spacingAndGlyphs" >24 Mar 14:00</text><text x="245.6" y="658.2" font-size="9.8" fill="#fff" textLength="54.6" lengthAdjust="spacingAndGlyphs" >25 Mar 22:00</text><text x="309.6" y="658.2" font-size="9.8" fill="#fff" textLength="54.6" lengthAdjust="spacingAndGlyphs" >27 Mar 04:00</text><text x="373.6" y="658.2" font-size="9.8" fill="#fff" textLength="54.6" lengthAdjust="spacingAndGlyphs" >30 Mar 10:00</text><text x="437.6" y="658.2" font-size="9.8" fill="#fff" textLength="54.6" lengthAdjust="spacingAndGlyphs" >31 Mar 18:00</text><text x="501.6" y="658.2" font-size="9.8" fill="#fff" textLength="49.6" lengthAdjust="spacingAndGlyphs" >2 Apr 00:00</text><text x="565.6" y="658.2" font-size="9.8" fill="#fff" textLength="49.6" lengthAdjust="spacingAndGlyphs" >6 Apr 04:00</text><text x="629.6" y="658.2" font-size="9.8" fill="#fff" textLength="49.6" lengthAdjust="spacingAndGlyphs" >7 Apr 14:00</text><text x="693.6" y="658.2" font-size="9.8" fill="#fff" textLength="49.6" lengthAdjust="spacingAndGlyphs" >8 Apr 22:00</text><text x="757.6" y="658.2" font-size="9.8" fill="#fff" textLength="54.6" lengthAdjust="spacingAndGlyphs" >10 Apr 04:00</text><text x="821.6" y="658.2" font-size="9.8" fill="#fff" textLength="54.6" lengthAdjust="spacingAndGlyphs" >13 Apr 10:00</text><text x="885.6" y="658.2" font-size="9.8" fill="#fff" textLength="54.6" lengthAdjust="spacingAndGlyphs" >14 Apr 18:00</text><text x="949.6" y="658.2" font-size="9.8" fill="#fff" textLength="54.6" lengthAdjust="spacingAndGlyphs" >16 Apr 00:00</text><text x="1013.6" y="658.2" font-size="9.8" fill="#fff" textLength="54.6" lengthAdjust="spacingAndGlyphs" >19 Apr 07:00</text><g shape-rendering="crispEdges"><rect x="0" y="666" width="1361" height="2" fill="#fff" /><rect x="0" y="668" width="1361" height="21" fill="#f0f0f0" /><rect x="0" y="668" width="24" height="1" fill="#000" /><rect x="118" y="668" width="1243" height="1" fill="#000" /><rect x="24" y="668" width="94" height="18" fill="#fff" /><rect x="23" y="668" width="1" height="19" fill="#000" /><rect x="118" y="669" width="2" height="18" fill="#000" /><rect x="24" y="686" width="96" height="2" fill="#000" /><rect x="215" y="671" width="1" height="14" fill="#606060" /><rect x="0" y="689" width="1361" height="1" fill="#fff" /><rect x="0" y="692" width="1361" height="1" fill="#a0a0a0" /><rect x="0" y="693" width="1361" height="1" fill="#f6f6f6" /><rect x="76" y="692" width="1" height="2" fill="#404040" /><rect x="271" y="692" width="1" height="2" fill="#909090" /><rect x="368" y="692" width="1" height="2" fill="#909090" /><rect x="444" y="692" width="1" height="2" fill="#909090" /><rect x="541" y="692" width="1" height="2" fill="#909090" /><rect x="648" y="692" width="1" height="2" fill="#909090" /><rect x="756" y="692" width="1" height="2" fill="#909090" /><rect x="864" y="692" width="1" height="2" fill="#909090" /><rect x="972" y="692" width="1" height="2" fill="#909090" /><rect x="1080" y="692" width="1" height="2" fill="#909090" /><rect x="1188" y="692" width="1" height="2" fill="#909090" /></g><text x="-4" y="680.5" font-size="10.2" fill="#707880" textLength="15.5" lengthAdjust="spacingAndGlyphs" >H1</text><text x="32.5" y="680.5" font-size="10.2" fill="#000" textLength="75.4" lengthAdjust="spacingAndGlyphs" >XAUUSD.mx,H4</text><text x="128.6" y="680.5" font-size="10.2" fill="#787878" textLength="74.8" lengthAdjust="spacingAndGlyphs" >XAUUSD.mx,H1</text><polygon points="1329,677 1333,673.5 1333,680.5" fill="#909090"/><polygon points="1351,677 1347,673.5 1347,680.5" fill="#909090"/><rect x="1359" y="39" width="1" height="628" fill="#fff" /><rect x="1360" y="38" width="1" height="629" fill="#f0f0f0" /><defs><filter id="idf" x="-0.05" y="-0.05" width="1.1" height="1.1"><feOffset dx="0" dy="0"/></filter></defs><g filter="url(#idf)"><text x="1.8" y="7.4" font-size="12" fill="#000" textLength="23.5" lengthAdjust="spacingAndGlyphs" >显示</text></g><text x="26.5" y="6.7" font-size="11" fill="#000" textLength="12.3" lengthAdjust="spacingAndGlyphs" >(V)</text><g filter="url(#idf)"><text x="55.9" y="7.4" font-size="12" fill="#000" textLength="23.5" lengthAdjust="spacingAndGlyphs" >插入</text></g><text x="80.6" y="6.7" font-size="11" fill="#000" textLength="10.6" lengthAdjust="spacingAndGlyphs" >(I)</text><g filter="url(#idf)"><text x="107.6" y="7.4" font-size="12" fill="#000" textLength="23.5" lengthAdjust="spacingAndGlyphs" >图表</text></g><text x="132.4" y="6.7" font-size="11" fill="#000" textLength="13.5" lengthAdjust="spacingAndGlyphs" >(C)</text><g filter="url(#idf)"><text x="163" y="7.4" font-size="12" fill="#000" textLength="23.5" lengthAdjust="spacingAndGlyphs" >工具</text></g><text x="187.7" y="6.7" font-size="11" fill="#000" textLength="10.8" lengthAdjust="spacingAndGlyphs" >(T)</text><g filter="url(#idf)"><text x="217" y="7.4" font-size="12" fill="#000" textLength="23.5" lengthAdjust="spacingAndGlyphs" >窗口</text></g><text x="241.7" y="6.7" font-size="11" fill="#000" textLength="16.3" lengthAdjust="spacingAndGlyphs" >(W)</text><g filter="url(#idf)"><text x="275" y="7.4" font-size="12" fill="#000" textLength="23.5" lengthAdjust="spacingAndGlyphs" >帮助</text></g><text x="299.7" y="6.7" font-size="11" fill="#000" textLength="13.3" lengthAdjust="spacingAndGlyphs" >(H)</text><g shape-rendering="crispEdges"><rect x="0" y="12" width="1361" height="1" fill="#a0a0a0" /><rect x="0" y="13" width="1361" height="1" fill="#fff" /><rect x="1306" y="-4" width="17" height="12" fill="#f0f0f0" /><rect x="1306" y="-4" width="1" height="12" fill="#fff" /><rect x="1306" y="8" width="17" height="1" fill="#696969" /><rect x="1322" y="-4" width="1" height="13" fill="#696969" /><rect x="1321" y="-4" width="1" height="12" fill="#a0a0a0" /><rect x="1307" y="7" width="15" height="1" fill="#a0a0a0" /><rect x="1323" y="-4" width="17" height="12" fill="#f0f0f0" /><rect x="1323" y="-4" width="1" height="12" fill="#fff" /><rect x="1323" y="8" width="17" height="1" fill="#696969" /><rect x="1339" y="-4" width="1" height="13" fill="#696969" /><rect x="1338" y="-4" width="1" height="12" fill="#a0a0a0" /><rect x="1324" y="7" width="15" height="1" fill="#a0a0a0" /><rect x="1342" y="-4" width="17" height="12" fill="#f0f0f0" /><rect x="1342" y="-4" width="1" height="12" fill="#fff" /><rect x="1342" y="8" width="17" height="1" fill="#696969" /><rect x="1358" y="-4" width="1" height="13" fill="#696969" /><rect x="1357" y="-4" width="1" height="12" fill="#a0a0a0" /><rect x="1343" y="7" width="15" height="1" fill="#a0a0a0" /><rect x="1310" y="4" width="7" height="2" fill="#000" /><rect x="1326" y="1" width="7" height="5" fill="#000" /><rect x="1327" y="3" width="5" height="2" fill="#fff" /><rect x="1329" y="-2" width="6" height="3" fill="#000" /><rect x="1333" y="0" width="2" height="3" fill="#000" /></g><path d="M1346.8,-3 L1353.4,4 M1353.4,-3 L1346.8,4" stroke="#000" stroke-width="2.4" fill="none" stroke-linecap="round"/><defs><pattern id="dz" width="2" height="2" patternUnits="userSpaceOnUse"><rect width="2" height="2" fill="#f0f0f0"/><rect width="1" height="1" fill="#fff"/><rect x="1" y="1" width="1" height="1" fill="#fff"/></pattern></defs><g shape-rendering="crispEdges"><rect x="0" y="15" width="1" height="23" fill="#b0b0b0" /><rect x="146" y="16" width="1" height="22" fill="#a0a0a0" /><rect x="147" y="16" width="1" height="22" fill="#fff" /><rect x="477" y="16" width="1" height="22" fill="#a0a0a0" /><rect x="478" y="16" width="1" height="22" fill="#fff" /><rect x="567" y="16" width="1" height="22" fill="#a0a0a0" /><rect x="568" y="16" width="1" height="22" fill="#fff" /><rect x="629" y="16" width="1" height="22" fill="#a0a0a0" /><rect x="630" y="16" width="1" height="22" fill="#fff" /><rect x="1066" y="16" width="1" height="22" fill="#a0a0a0" /><rect x="1067" y="16" width="1" height="22" fill="#fff" /><rect x="382" y="14" width="1" height="25" fill="#a0a0a0" /><rect x="383" y="14" width="1" height="25" fill="#fff" /><rect x="738" y="14" width="1" height="25" fill="#a0a0a0" /><rect x="739" y="14" width="1" height="25" fill="#fff" /><rect x="999" y="14" width="1" height="25" fill="#a0a0a0" /><rect x="1000" y="14" width="1" height="25" fill="#fff" /><rect x="386" y="17" width="3" height="1" fill="#b4b4b4" /><rect x="386" y="19" width="3" height="1" fill="#b4b4b4" /><rect x="386" y="21" width="3" height="1" fill="#b4b4b4" /><rect x="386" y="23" width="3" height="1" fill="#b4b4b4" /><rect x="386" y="25" width="3" height="1" fill="#b4b4b4" /><rect x="386" y="27" width="3" height="1" fill="#b4b4b4" /><rect x="386" y="29" width="3" height="1" fill="#b4b4b4" /><rect x="386" y="31" width="3" height="1" fill="#b4b4b4" /><rect x="386" y="33" width="3" height="1" fill="#b4b4b4" /><rect x="386" y="35" width="3" height="1" fill="#b4b4b4" /><rect x="742" y="17" width="3" height="1" fill="#b4b4b4" /><rect x="742" y="19" width="3" height="1" fill="#b4b4b4" /><rect x="742" y="21" width="3" height="1" fill="#b4b4b4" /><rect x="742" y="23" width="3" height="1" fill="#b4b4b4" /><rect x="742" y="25" width="3" height="1" fill="#b4b4b4" /><rect x="742" y="27" width="3" height="1" fill="#b4b4b4" /><rect x="742" y="29" width="3" height="1" fill="#b4b4b4" /><rect x="742" y="31" width="3" height="1" fill="#b4b4b4" /><rect x="742" y="33" width="3" height="1" fill="#b4b4b4" /><rect x="742" y="35" width="3" height="1" fill="#b4b4b4" /><rect x="1003" y="17" width="3" height="1" fill="#b4b4b4" /><rect x="1003" y="19" width="3" height="1" fill="#b4b4b4" /><rect x="1003" y="21" width="3" height="1" fill="#b4b4b4" /><rect x="1003" y="23" width="3" height="1" fill="#b4b4b4" /><rect x="1003" y="25" width="3" height="1" fill="#b4b4b4" /><rect x="1003" y="27" width="3" height="1" fill="#b4b4b4" /><rect x="1003" y="29" width="3" height="1" fill="#b4b4b4" /><rect x="1003" y="31" width="3" height="1" fill="#b4b4b4" /><rect x="1003" y="33" width="3" height="1" fill="#b4b4b4" /><rect x="1003" y="35" width="3" height="1" fill="#b4b4b4" /><rect x="89" y="15" width="26" height="23" fill="#f0f0f0" /><rect x="89" y="15" width="26" height="23" fill="url(#dz)" /><rect x="89" y="15" width="26" height="1" fill="#a8a8a8" /><rect x="89" y="15" width="1" height="23" fill="#a8a8a8" /><rect x="89" y="37" width="26" height="1" fill="#fff" /><rect x="114" y="15" width="1" height="23" fill="#fff" /><rect x="420" y="15" width="26" height="23" fill="#f0f0f0" /><rect x="420" y="15" width="26" height="23" fill="url(#dz)" /><rect x="420" y="15" width="26" height="1" fill="#a8a8a8" /><rect x="420" y="15" width="1" height="23" fill="#a8a8a8" /><rect x="420" y="37" width="26" height="1" fill="#fff" /><rect x="445" y="15" width="1" height="23" fill="#fff" /><rect x="572" y="15" width="26" height="23" fill="#f0f0f0" /><rect x="572" y="15" width="26" height="23" fill="url(#dz)" /><rect x="572" y="15" width="26" height="1" fill="#a8a8a8" /><rect x="572" y="15" width="1" height="23" fill="#a8a8a8" /><rect x="572" y="37" width="26" height="1" fill="#fff" /><rect x="597" y="15" width="1" height="23" fill="#fff" /><rect x="600" y="15" width="26" height="23" fill="#f0f0f0" /><rect x="600" y="15" width="26" height="23" fill="url(#dz)" /><rect x="600" y="15" width="26" height="1" fill="#a8a8a8" /><rect x="600" y="15" width="1" height="23" fill="#a8a8a8" /><rect x="600" y="37" width="26" height="1" fill="#fff" /><rect x="625" y="15" width="1" height="23" fill="#fff" /><rect x="888" y="15" width="26" height="23" fill="#f0f0f0" /><rect x="888" y="15" width="26" height="23" fill="url(#dz)" /><rect x="888" y="15" width="26" height="1" fill="#a8a8a8" /><rect x="888" y="15" width="1" height="23" fill="#a8a8a8" /><rect x="888" y="37" width="26" height="1" fill="#fff" /><rect x="913" y="15" width="1" height="23" fill="#fff" /><rect x="1009" y="15" width="26" height="23" fill="#f0f0f0" /><rect x="1009" y="15" width="26" height="23" fill="url(#dz)" /><rect x="1009" y="15" width="26" height="1" fill="#a8a8a8" /><rect x="1009" y="15" width="1" height="23" fill="#a8a8a8" /><rect x="1009" y="37" width="26" height="1" fill="#fff" /><rect x="1034" y="15" width="1" height="23" fill="#fff" /></g><defs><linearGradient id="gf" x1="0" y1="0" x2="0" y2="1"><stop offset="0" stop-color="#fffcd8"/><stop offset="1" stop-color="#ecc84a"/></linearGradient><radialGradient id="gs" cx="0.45" cy="0.4" r="0.6"><stop offset="0" stop-color="#fff27a"/><stop offset="1" stop-color="#e8b820"/></radialGradient></defs><rect x="9.6" y="19.6" width="15" height="15" rx="1.6" fill="#fff" stroke="#5b9bd5" stroke-width="1.2"/><rect x="9.6" y="19.3" width="15" height="1.8" rx="0.8" fill="#5b9bd5"/><path d="M19,23.5h4M19,25.5h4M12,29.5h4M12,31.5h4" stroke="#e0e0e0" stroke-width="0.8"/><path d="M14.5,22.2 l3.5,3.4 h-1.9 v2.3 h-3.2 v-2.3 h-1.9 z" fill="#30b848" stroke="#138a2a" stroke-width="0.6"/><path d="M18.5,32.8 l3.5,-3.3 h-1.9 v-2.2 h-3.2 v2.2 h-1.9 z" fill="#f0642a" stroke="#c8441a" stroke-width="0.6"/><g stroke="#6e6e6e" stroke-width="1.4" fill="none"><circle cx="45.5" cy="27.3" r="5.3"/><path d="M45.5,20v14.7M38.2,27.3h14.7"/></g><path d="M64.6,21 q0,-1.6 1.5,-1.6 h3 q1.2,0 1.6,1.4 l0.4,1 h4.6 v7 h-11.1 z" fill="url(#gf)" stroke="#c8a428" stroke-width="0.9"/><polygon points="76.30,23.90 77.89,27.82 82.10,28.11 78.87,30.83 79.89,34.94 76.30,32.70 72.71,34.94 73.73,30.83 70.50,28.11 74.71,27.82" fill="url(#gs)" stroke="#b88a10" stroke-width="0.9" stroke-linejoin="round"/><path d="M68.5,30v5.5" stroke="#333" stroke-width="1" stroke-dasharray="1 1"/><defs><linearGradient id="gb" x1="0" y1="0" x2="0" y2="1"><stop offset="0" stop-color="#7ab4f4"/><stop offset="0.55" stop-color="#3a78d0"/><stop offset="1" stop-color="#20406a"/></linearGradient><linearGradient id="gp" x1="0" y1="0" x2="1" y2="1"><stop offset="0" stop-color="#5ae05a"/><stop offset="1" stop-color="#109a10"/></linearGradient></defs><rect x="93.6" y="20.5" width="15" height="13.2" rx="1.6" fill="#fff" stroke="#2f6fc4" stroke-width="1.3"/><rect x="94.4" y="21.3" width="2.8" height="11.6" fill="url(#gb)"/><path d="M98,22.8h10M98,25.4h10M98,28h10M98,30.6h10" stroke="#c4d6f6" stroke-width="0.9"/><path d="M98,22.8h1.3M98,28.6h1.3" stroke="#e81818" stroke-width="1.3"/><path d="M98,24.8h1.3M98,26.7h1.3" stroke="#203020" stroke-width="1.2"/><rect x="95" y="22" width="1.2" height="1.2" fill="#000"/><rect x="121.6" y="19.6" width="12" height="13" rx="0.8" fill="#f6f2e8" stroke="#b4a88c" stroke-width="1"/><path d="M124.5,22v6M131,22v6M123,25h3M129.5,24h3" stroke="#9a9a9a" stroke-width="0.9"/><path d="M133.2,31.6 l4.6,3.8" stroke="#c8980c" stroke-width="2.6" stroke-linecap="round"/><circle cx="129.4" cy="27.6" r="5.2" fill="#dcebfa" fill-opacity="0.88" stroke="#5b90d8" stroke-width="1.3"/><path d="M128,25 q2.5,-0.5 2.5,2 v2.8 h-2.2 z" fill="#9aa8b8"/><path d="M156.4,19.8 h8 l3.4,3.4 v9.2 h-11.4 z" fill="#fff" stroke="#7a7a7a" stroke-width="1"/><path d="M164.4,19.8 v3.4 h3.4" fill="#e8e8e8" stroke="#7a7a7a" stroke-width="0.8"/><path d="M158.5,22.3h2.5" stroke="#888" stroke-width="1.4"/><path d="M158.5,25.2h5M158.5,27.6h4M158.5,30h3" stroke="#999" stroke-width="1"/><path d="M164,25.4 h4 v3.8 h3.8 v4 h-3.8 v3.8 h-4 v-3.8 h-3.8 v-4 h3.8z" fill="url(#gp)" stroke="#0e8a0e" stroke-width="0.8"/><g filter="url(#idf)"><text x="175" y="30.7" font-size="12.4" fill="#000" textLength="35.6" lengthAdjust="spacingAndGlyphs" >新订单</text></g><defs><linearGradient id="gk" x1="0" y1="0" x2="1" y2="1"><stop offset="0" stop-color="#f4c830"/><stop offset="0.5" stop-color="#ffe060"/><stop offset="1" stop-color="#c89010"/></linearGradient><linearGradient id="gsv" x1="0" y1="0" x2="1" y2="0"><stop offset="0" stop-color="#1e8cf4"/><stop offset="0.4" stop-color="#1e8cf4"/><stop offset="0.42" stop-color="#8cc4fa"/><stop offset="1" stop-color="#4aa0f0"/></linearGradient><linearGradient id="gsg" x1="0" y1="0" x2="1" y2="0"><stop offset="0" stop-color="#3a78e0"/><stop offset="0.5" stop-color="#8ab4d8"/><stop offset="1" stop-color="#4aa84a"/></linearGradient></defs><path d="M223.2,28.6 L229.2,20 L239,27.6 L239,29.4 L231,35 L223.2,30.4z" fill="#b07a10"/><path d="M231.4,34 L238.6,28.9" stroke="#f8f0d0" stroke-width="1.1"/><path d="M223.2,28.6 L229.2,20 L239,27.6 L231,33.2z" fill="url(#gk)" stroke="#b8820e" stroke-width="0.7"/><path d="M253.2,21 l4.2,-1.8 h6.6 v9 h-10.8z" fill="url(#gsv)" stroke="#1a6ad0" stroke-width="0.7"/><rect x="259" y="22.6" width="4" height="1.6" fill="#fff"/><path d="M254.2,34.5 a3,3 0 0 1 0.4,-5.9 a3.6,3.6 0 0 1 6.6,-1 a3,3 0 0 1 3.6,1.6 a2.8,2.8 0 0 1 -0.6,5.3 z" fill="#f0f4fa" stroke="#6a8cc0" stroke-width="1"/><g fill="none" stroke="url(#gsg)"><circle cx="287" cy="27" r="7.6" stroke-width="1.2" stroke-opacity="0.75"/><circle cx="287" cy="27" r="5.4" stroke-width="1.3"/><circle cx="287" cy="27" r="3.3" stroke-width="1.3"/></g><path d="M287,27 L294.4,29 A7.6,7.6 0 0 1 287,34.6z" fill="#4aa84a" fill-opacity="0.55"/><circle cx="287" cy="26.8" r="1.9" fill="#2a62d8"/><path d="M287.3,27.5 v7.2" stroke="#28a428" stroke-width="1.6"/><path d="M307,27 l7,8 7,-6 -3,-4z" fill="#f8d848" stroke="#c8a020" stroke-width="0.8"/><ellipse cx="313.5" cy="25.5" rx="7.5" ry="3.2" fill="#5ab4ec" stroke="#2a80c8" stroke-width="0.8"/><path d="M309.5,24.5 a4,4.5 0 0 1 8,0z" fill="#8cd0f8" stroke="#2a80c8" stroke-width="0.8"/><circle cx="318.7" cy="31" r="4.3" fill="#e02a1f"/><rect x="316.9" y="29.2" width="3.6" height="3.6" fill="#fff"/><g filter="url(#idf)"><text x="327.5" y="30.7" font-size="12.4" fill="#000" textLength="46.6" lengthAdjust="spacingAndGlyphs" >自动交易</text></g><path d="M400.5,21v14M398,32.5h14" stroke="#555" stroke-width="1.2" fill="none"/><path d="M398.7,23.5l1.8,-2.5 1.8,2.5M409.5,30.7l2.5,1.8 -2.5,1.8" stroke="#555" stroke-width="1" fill="none"/><path d="M406.5,22v9M406.5,23.5h2.5M404,29.5h2.5" stroke="#1c9b35" stroke-width="1.5" fill="none"/><path d="M428.5,21v14M426,32.5h14" stroke="#555" stroke-width="1.2" fill="none"/><path d="M426.7,23.5l1.8,-2.5 1.8,2.5M437.5,30.7l2.5,1.8 -2.5,1.8" stroke="#555" stroke-width="1" fill="none"/><path d="M434.5,19.5v12" stroke="#1c9b35" stroke-width="1.2"/><rect x="432.5" y="21.5" width="4" height="7.5" fill="#2fc24a" stroke="#178a2c" stroke-width="1"/><path d="M456.5,21v14M454,32.5h14" stroke="#555" stroke-width="1.2" fill="none"/><path d="M454.7,23.5l1.8,-2.5 1.8,2.5M465.5,30.7l2.5,1.8 -2.5,1.8" stroke="#555" stroke-width="1" fill="none"/><path d="M455.3,29.6 q3.5,-6.5 6.4,-5.4 q2,0.8 5.2,4.4" stroke="#1c9b35" stroke-width="1.4" fill="none"/><path d="M496.3,29.2 l4.6,4.4" stroke="#a88a10" stroke-width="3.2" stroke-linecap="round"/><path d="M496.3,29.2 l4.6,4.4" stroke="#ecd030" stroke-width="1.9" stroke-linecap="round"/><circle cx="492" cy="24.8" r="5.4" fill="#d4ecfa" stroke="#2f7cd0" stroke-width="1.2"/><path d="M489,24.8h6" stroke="#3a80c0" stroke-width="1.7"/><path d="M492,21.8v6" stroke="#3a80c0" stroke-width="1.7"/><path d="M524.3,29.2 l4.6,4.4" stroke="#a88a10" stroke-width="3.2" stroke-linecap="round"/><path d="M524.3,29.2 l4.6,4.4" stroke="#ecd030" stroke-width="1.9" stroke-linecap="round"/><circle cx="520" cy="24.8" r="5.4" fill="#d4ecfa" stroke="#2f7cd0" stroke-width="1.2"/><path d="M517,24.8h6" stroke="#3a80c0" stroke-width="1.7"/><rect x="542" y="19" width="7.8" height="7.8" fill="#3aa028" /><rect x="542" y="19" width="7.8" height="1.6" fill="#2a8a1a" /><path d="M543.6,22.4h4.8v3.6h-1.1v-1.2h-2.6v1.2h-1.1z" fill="#fff"/><path d="M544.6,23.6h2.8" stroke="#3aa028" stroke-opacity="0.5" stroke-width="0.7"/><rect x="550.3" y="19" width="7.8" height="7.8" fill="#2a5ce0" /><rect x="550.3" y="19" width="7.8" height="1.6" fill="#1a44c0" /><path d="M551.9,22.4h4.8v3.6h-1.1v-1.2h-2.6v1.2h-1.1z" fill="#fff"/><path d="M552.9,23.6h2.8" stroke="#2a5ce0" stroke-opacity="0.5" stroke-width="0.7"/><rect x="542" y="27.3" width="7.8" height="7.8" fill="#2a5ce0" /><rect x="542" y="27.3" width="7.8" height="1.6" fill="#1a44c0" /><path d="M543.6,30.7h4.8v3.6h-1.1v-1.2h-2.6v1.2h-1.1z" fill="#fff"/><path d="M544.6,31.9h2.8" stroke="#2a5ce0" stroke-opacity="0.5" stroke-width="0.7"/><rect x="550.3" y="27.3" width="7.8" height="7.8" fill="#3aa028" /><rect x="550.3" y="27.3" width="7.8" height="1.6" fill="#2a8a1a" /><path d="M551.9,30.7h4.8v3.6h-1.1v-1.2h-2.6v1.2h-1.1z" fill="#fff"/><path d="M552.9,31.9h2.8" stroke="#3aa028" stroke-opacity="0.5" stroke-width="0.7"/><path d="M580.5,21v14M578,32.5h14" stroke="#555" stroke-width="1.2" fill="none"/><path d="M578.7,23.5l1.8,-2.5 1.8,2.5M589.5,30.7l2.5,1.8 -2.5,1.8" stroke="#555" stroke-width="1" fill="none"/><path d="M585.4,23.2 l3.6,3.2 -3.6,3.2z" fill="#58e058" stroke="#109a10" stroke-width="1"/><path d="M608.5,21v14M606,32.5h14" stroke="#555" stroke-width="1.2" fill="none"/><path d="M606.7,23.5l1.8,-2.5 1.8,2.5M617.5,30.7l2.5,1.8 -2.5,1.8" stroke="#555" stroke-width="1" fill="none"/><path d="M614.5,21v11" stroke="#2a6fd0" stroke-width="1.3"/><path d="M620,26.5h-4M618,24.5l-2.5,2 2.5,2" stroke="#d2501e" stroke-width="1.2" fill="none"/><g transform="translate(483.1,0)"><path d="M156.4,19.8 h8 l3.4,3.4 v9.2 h-11.4 z" fill="#fff" stroke="#7a7a7a" stroke-width="1"/><path d="M164.4,19.8 v3.4 h3.4" fill="#e8e8e8" stroke="#7a7a7a" stroke-width="0.8"/><path d="M159.5,23v6M159.5,23.5h2.5M159.5,26h2" stroke="#555" stroke-width="1" fill="none"/><path d="M164,25.4 h4 v3.8 h3.8 v4 h-3.8 v3.8 h-4 v-3.8 h-3.8 v-4 h3.8z" fill="url(#gp)" stroke="#0e8a0e" stroke-width="0.8"/></g><defs><linearGradient id="gc" x1="0" y1="0" x2="0.6" y2="1"><stop offset="0" stop-color="#3aa0f4"/><stop offset="0.5" stop-color="#1a68d0"/><stop offset="1" stop-color="#0a2a78"/></linearGradient></defs><circle cx="681" cy="27" r="6.6" fill="#fff" stroke="url(#gc)" stroke-width="2.7"/><circle cx="681" cy="27" r="4.4" fill="none" stroke="#b8c4d8" stroke-width="0.9" stroke-dasharray="0.8 1.5"/><path d="M680.6,23.2v4.2h3.2" stroke="#303038" stroke-width="1.3" fill="none"/><rect x="708.5" y="20.5" width="15" height="13" fill="#fff" stroke="#3a78d0" stroke-width="1.1"/><rect x="708" y="20" width="16" height="2.6" fill="#4a8ae0"/><path d="M709,27.3h14" stroke="#3a78d0" stroke-width="0.9"/><path d="M710,26l2.5,-0.8 2.5,-1.2 2.5,0.8 2.5,-1.4 2,0.2" stroke="#b02810" stroke-width="1.2" fill="none"/><path d="M710.5,31.5l2.5,-0.8 2.5,0.2 2.8,-2.2 2.2,2 1.5,0.3" stroke="#1a9a2a" stroke-width="1.2" fill="none"/><polygon points="657.2,25.5 662.2,25.5 659.7,28.5" fill="#000"/><polygon points="692.4,25.5 697.4,25.5 694.9,28.5" fill="#000"/><polygon points="727,25.5 732,25.5 729.5,28.5" fill="#000"/><polygon points="1289.6,25.5 1294.6,25.5 1292.1,28.5" fill="#000"/><g filter="url(#idf)"><text x="753.6" y="31" font-size="9.8" fill="#444" textLength="12.6" lengthAdjust="spacingAndGlyphs" >M1</text><text x="781.4" y="31" font-size="9.8" fill="#444" textLength="12.9" lengthAdjust="spacingAndGlyphs" >M5</text><text x="807.4" y="31" font-size="9.8" fill="#444" textLength="17.8" lengthAdjust="spacingAndGlyphs" >M15</text><text x="835.7" y="31" font-size="9.8" fill="#444" textLength="17.7" lengthAdjust="spacingAndGlyphs" >M30</text><text x="866.5" y="31" font-size="9.8" fill="#444" textLength="11.6" lengthAdjust="spacingAndGlyphs" >H1</text><text x="893.5" y="31" font-size="9.8" fill="#444" textLength="12.4" lengthAdjust="spacingAndGlyphs" >H4</text><text x="922.6" y="31" font-size="9.8" fill="#444" textLength="11.5" lengthAdjust="spacingAndGlyphs" >D1</text><text x="950" y="31" font-size="9.8" fill="#444" textLength="14.2" lengthAdjust="spacingAndGlyphs" >W1</text><text x="976.7" y="31" font-size="9.8" fill="#444" textLength="14.5" lengthAdjust="spacingAndGlyphs" >MN</text></g><path d="M1017,20 v12 l2.8,-2.6 2.2,4.6 2,-1 -2.2,-4.4 h3.8z" fill="#444"/><path d="M1049.5,20.5v14M1042,27.5h15" stroke="#444" stroke-width="1.2"/><path d="M1083.5,21v13" stroke="#444" stroke-width="1.2"/><path d="M1106,27.5h12.5" stroke="#444" stroke-width="1.2"/><path d="M1134,34l12,-12.5" stroke="#444" stroke-width="1.3"/><path d="M1159.5,28.6L1172.6,20.2M1161,33.2L1174,25.4M1162.6,33V26.6M1165.8,31.2V24.5M1169,29.2V22.4M1172.2,27.4V19" stroke="#444" stroke-width="1.15" fill="none"/><text x="1170.6" y="35.8" font-size="7" fill="#222" font-weight="bold">E</text><g shape-rendering="crispEdges"><path d="M1189,20.5h13M1189,23.5h13M1189,27.5h13M1189,31.5h9" stroke="#444" stroke-width="1" stroke-dasharray="1 1"/></g><text x="1198.6" y="35.8" font-size="7" fill="#222" font-weight="bold">F</text><text x="1219.5" y="32.1" font-size="12.6" fill="#555" textLength="8" lengthAdjust="spacingAndGlyphs" font-weight="bold">A</text><g shape-rendering="crispEdges"><path d="M1246,21.5h12M1246,33.5h12M1246.5,21v13M1257.5,21v13" stroke="#333" stroke-width="1" stroke-dasharray="1 1" fill="none"/></g><text x="1247.8" y="32.2" font-size="12.6" fill="#444" textLength="8.4" lengthAdjust="spacingAndGlyphs" font-weight="bold">T</text><path d="M1273.5,24 l3,-3 3,3 -3,3z M1280.5,30.5 l3,-3 3,3 -3,3z" fill="#444"/><path d="M1275.5,29l2,2.5 3.5,-5" stroke="#444" stroke-width="1.3" fill="none"/><path d="M1312.6,27.4l-4.4,4.6" stroke="#2a62dc" stroke-width="2.3" stroke-linecap="round"/><circle cx="1315.6" cy="24" r="4.1" fill="#fdfdff" stroke="#2a62dc" stroke-width="1.5"/><path d="M1333,29 a5.8,4.4 0 0 1 11.4,0 a5.8,4.4 0 0 1 -6.4,4.4 l-2.6,2.4 0.2,-2.8 a5,4 0 0 1 -2.6,-4z" fill="#e6e8f0" stroke="#b4b6c0" stroke-width="0.9"/><defs><radialGradient id="rb" cx="0.4" cy="0.3" r="0.8"><stop offset="0" stop-color="#f46a4e"/><stop offset="1" stop-color="#c81e10"/></radialGradient></defs><circle cx="1346.6" cy="24.2" r="8.1" fill="url(#rb)"/><text x="1343.6" y="27.9" font-size="10.5" fill="#fff" font-weight="bold" font-family="Liberation Serif, serif">1</text></svg></body></html>
